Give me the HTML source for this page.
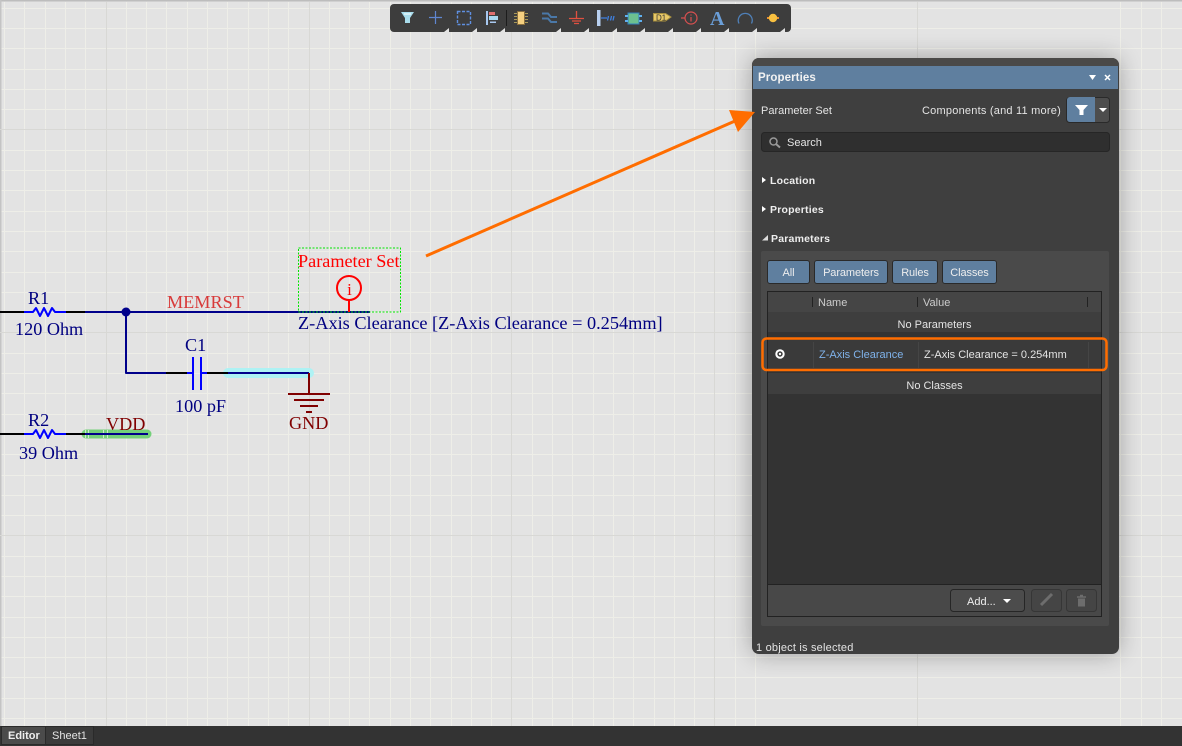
<!DOCTYPE html>
<html><head><meta charset="utf-8"><style>
html,body{margin:0;padding:0;background:#e3e3e3}
#r{position:relative;width:1182px;height:746px;overflow:hidden;background:#e3e3e3}
svg{position:absolute;left:0;top:0}
.p{position:absolute;font-family:"Liberation Sans",sans-serif;font-size:11px;letter-spacing:0;color:#e4e4e4;white-space:nowrap;line-height:14px}
.b{font-size:10.5px;font-weight:bold;letter-spacing:.2px;color:#eee}
.btn{position:absolute;top:260px;height:24px;line-height:24px;background:#5f7f9f;border:1px solid #2a2a2a;border-radius:3px;box-sizing:border-box;text-align:center;font-family:"Liberation Sans",sans-serif;font-size:11px;letter-spacing:-.1px;color:#eee}
</style></head><body><div id="r">
<svg width="1182" height="746" viewBox="0 0 1182 746">
<path fill="none" stroke="#eeeee8" stroke-width="1" d="M4.5 2V726M24.500 2V726M45.500 2V726M65.500 2V726M85.500 2V726M126.500 2V726M146.500 2V726M166.500 2V726M187.500 2V726M207.500 2V726M227.500 2V726M248.500 2V726M268.500 2V726M288.500 2V726M329.500 2V726M349.500 2V726M369.500 2V726M390.500 2V726M410.500 2V726M430.500 2V726M451.500 2V726M471.500 2V726M491.500 2V726M532.500 2V726M552.500 2V726M572.500 2V726M593.500 2V726M613.500 2V726M633.500 2V726M654.500 2V726M674.500 2V726M694.500 2V726M735.500 2V726M755.500 2V726M1120.500 2V726M1141.500 2V726M1161.500 2V726M0 8.500H1182M0 28.500H1182M0 48.500H1182M0 69.500H1182M0 89.500H1182M0 109.500H1182M0 150.500H1182M0 170.500H1182M0 190.500H1182M0 211.500H1182M0 231.500H1182M0 251.500H1182M0 272.500H1182M0 292.500H1182M0 312.500H1182M0 353.500H1182M0 373.500H1182M0 393.500H1182M0 414.500H1182M0 434.500H1182M0 454.500H1182M0 475.500H1182M0 495.500H1182M0 515.500H1182M0 556.500H1182M0 576.500H1182M0 596.500H1182M0 617.500H1182M0 637.500H1182M0 657.500H1182M0 677.500H1182M0 698.500H1182M0 718.500H1182"/>
<rect width="1182" height="1.500" fill="#bdbdbd"/><rect width="1.500" height="726" fill="#c4c4c4"/>
<g fill="#d8d8d5"><rect x="106" y="2" width="1" height="724"/><rect x="309" y="2" width="1" height="724"/><rect x="511" y="2" width="1" height="724"/><rect x="714" y="2" width="1" height="724"/><rect x="917" y="2" width="1" height="724"/><rect y="129" width="1182" height="1"/><rect y="332" width="1182" height="1"/><rect y="535" width="1182" height="1"/></g>

<!-- schematic -->
<g fill="none" stroke-linejoin="round">
<path d="M228 373H309" stroke="#aef2f4" stroke-width="10" stroke-linecap="round"/>
<path d="M86 434H147" stroke="#74d07a" stroke-width="9" stroke-linecap="round"/>
<path d="M85.500 430V438M88.500 430V438M103.500 430V438M107.500 430V438" stroke="#cdeccb" stroke-width="1"/>
<path d="M0 312H24M66 312H85M0 434H24M66 434H148M166 373H187M207 373H228" stroke="#000" stroke-width="2"/>
<path d="M85 312H370M126 312V373H166M228 373H309M85 434H148" stroke="#00008b" stroke-width="2"/>
<path d="M24 312H33L36 308L40 316L44 308L48 316L52 308L55 312H66M24 434H33L36 430L40 438L44 430L48 438L52 430L55 434H66M187 373H193M201 373H207M193 357V390M201 357V390" stroke="#0000ff" stroke-width="2"/>
<path d="M309 373V394M288 394H330M294 400H324M300 406H318M306 412H312" stroke="#800000" stroke-width="2"/>
<circle cx="126" cy="312" r="4.500" fill="#00008b"/>
<rect x="298.500" y="248" width="102" height="64" stroke="#00e600" stroke-width="1" stroke-dasharray="2 1.500"/>
<circle cx="349" cy="288" r="12" stroke="#ff0000" stroke-width="2"/>
<path d="M349 300V312" stroke="#ff0000" stroke-width="2"/>
</g>
<g font-family="'Liberation Serif',serif" font-size="18.200px">
<text x="28" y="304" fill="#000080">R1</text>
<text x="15" y="335" fill="#000080">120 Ohm</text>
<text x="167" y="308" fill="#d83a3a">MEMRST</text>
<text x="185" y="351" fill="#000080">C1</text>
<text x="175" y="412" fill="#000080">100 pF</text>
<text x="289" y="429" fill="#800000">GND</text>
<text x="28" y="426" fill="#000080">R2</text>
<text x="19" y="459" fill="#000080">39 Ohm</text>
<text x="106" y="430" fill="#800000">VDD</text>
<text x="298" y="267" fill="#ff0000">Parameter Set</text>
<text x="349.500" y="295" fill="#ff0000" text-anchor="middle" font-size="17px">i</text>
<text x="298" y="329" fill="#000080" font-size="18.300px">Z-Axis Clearance [Z-Axis Clearance = 0.254mm]</text>
</g>

<!-- toolbar -->
<rect x="390" y="4" width="401" height="28" rx="4" fill="#3d3d3d"/>
<path d="M401 12H414L410 18V23H405V18Z" fill="#a9dcec"/><path d="M404 14H411" stroke="#fff"/>
<path d="M435.500 11V24M429 17.500H442" stroke="#5f86d0" stroke-width="1.200" fill="none"/>
<rect x="457.500" y="11.500" width="13" height="13" fill="none" stroke="#5f8fe0" stroke-width="1.400" stroke-dasharray="3 1.500"/>
<rect x="486" y="11" width="2" height="14" fill="#a8c8f0"/><rect x="489" y="12" width="6" height="3" fill="#e07070"/><rect x="489" y="16" width="9" height="4" fill="#a8d8f0"/><rect x="490" y="21.500" width="6" height="1.500" fill="#a8c8f0"/>
<rect x="506" y="10" width="1" height="16" fill="#1c1c1c"/>
<rect x="517.500" y="11.500" width="7" height="13" fill="#f5d080" stroke="#8a7040"/>
<path d="M514 13.500H517M514 16.500H517M514 19.500H517M514 22.500H517M525 13.500H528M525 16.500H528M525 19.500H528M525 22.500H528" stroke="#a89858"/>
<path d="M542 13.500H548L551 17H557M542 18.500H548L551 22H557" stroke="#4a78a8" stroke-width="2" fill="none"/>
<path d="M576.500 11V18.500M569 18.500H584M572 21H581M574 23.500H579" stroke="#e05040" stroke-width="1.300" fill="none"/>
<rect x="597" y="10" width="3.500" height="16" fill="#b8d0f0"/>
<path d="M601 18H607M607.500 20.500L608.500 16M610.500 20.500L611.500 16M613 20.500L614 16" stroke="#3f80e0" stroke-width="1.300" fill="none"/>
<rect x="628" y="13" width="11" height="11" fill="#6cc090" stroke="#3080c0"/>
<path d="M625 16H628M625 21H628M639 16H642M639 21H642" stroke="#5fb0f0" stroke-width="2"/>
<path d="M653.500 13.500H665.500L671 17L665.500 21H653.500Z" fill="#e8c868" stroke="#a89040"/>
<text x="656" y="20.500" font-family="'Liberation Sans',sans-serif" font-size="8px" fill="#333">D1</text>
<circle cx="691" cy="18" r="6" fill="none" stroke="#d85050" stroke-width="1.200"/><path d="M681 18H685M691 14.500V15.500M691 17V21.500" stroke="#d85050" stroke-width="1.200"/>
<text x="710" y="25" font-family="'Liberation Serif',serif" font-weight="bold" font-size="20px" fill="#6a9ed8">A</text>
<path d="M739 23.500A7 7 0 1 1 751.500 23.500" fill="none" stroke="#4f80b8" stroke-width="1.300"/>
<path d="M767 18H779" stroke="#e89030" stroke-width="2"/><circle cx="773" cy="18" r="4.200" fill="#f8c040"/>
<path fill="#e4e4e4" d="M444 32L449 28V32ZM472 32L477 28V32ZM500 32L505 28V32ZM556 32L561 28V32ZM584 32L589 28V32ZM612 32L617 28V32ZM640 32L645 28V32ZM668 32L673 28V32ZM696 32L701 28V32ZM724 32L729 28V32ZM752 32L757 28V32ZM780 32L785 28V32Z"/>

<!-- panel -->
<rect x="752" y="58" width="367" height="596" rx="8" fill="#000" opacity=".3" style="filter:blur(12px)"/>
<rect x="752" y="58" width="367" height="596" rx="7" fill="#3f3f3f"/>
<path d="M752 66a7 7 0 0 1 7-8h353a7 7 0 0 1 7 8z" fill="#4a4948"/>
<rect x="753" y="66" width="365" height="23" fill="#5f7f9f"/>
<path d="M1089 75H1096L1092.500 80Z" fill="#fff"/><path d="M1105 75L1110 80M1110 75L1105 80" stroke="#fff" stroke-width="1.500"/>
<rect x="1066.500" y="97.500" width="43" height="25" rx="3" fill="#4d4d4d" stroke="#2a2a2a"/>
<path d="M1067 100a3 3 0 0 1 3-3h25v25h-25a3 3 0 0 1-3-3z" fill="#5f7f9f"/><path d="M1075 105H1088L1083.500 110V115H1079.500V110Z" fill="#fff"/><path d="M1099 108H1107L1103 112Z" fill="#fff"/>
<rect x="761.500" y="132.500" width="348" height="19" rx="3" fill="#2f2f2f" stroke="#262626"/>
<circle cx="773.500" cy="141.500" r="3.500" fill="none" stroke="#999" stroke-width="1.500"/><path d="M776 144L780 147.500" stroke="#999" stroke-width="2"/>
<path d="M762 177V183L766 180Z M762 206V212L766 209Z" fill="#fff"/><path d="M762 240.500H768V235Z" fill="#ddd"/>
<rect x="761" y="251" width="348" height="375" rx="2" fill="#4a4a4a"/>
<rect x="767.500" y="291.500" width="334" height="325" fill="#333" stroke="#222"/>
<rect x="768" y="292" width="333" height="20" fill="#454545"/>
<rect x="768" y="312" width="333" height="20" fill="#3e3e3e"/>
<rect x="768" y="338" width="333" height="32" fill="#3a3a3a"/>
<rect x="768" y="373" width="333" height="21" fill="#3e3e3e"/>
<rect x="768" y="585" width="333" height="31" fill="#484848"/><path d="M768 584.500H1101" stroke="#222"/>
<path d="M812.500 297V307M917.500 297V307M1087.500 297V307" stroke="#222" stroke-width="1"/>
<path d="M813.500 342V368M918.500 342V368M1088.500 342V368" stroke="#454545"/>
<circle cx="780" cy="354" r="4.700" fill="#fff"/><circle cx="780" cy="354" r="2.700" fill="#3a3a3a"/><circle cx="780" cy="354" r="1.200" fill="#fff"/>
<rect x="762.500" y="338.500" width="344" height="31.500" rx="4" fill="none" stroke="#ff6d00" stroke-width="2.500"/>
<rect x="950.500" y="589.500" width="74" height="22" rx="3" fill="#4c4c4c" stroke="#262626"/>
<path d="M1003 599H1011L1007 603Z" fill="#fff"/>
<rect x="1031.500" y="589.500" width="30" height="22" rx="3" fill="#454545" stroke="#363636"/>
<rect x="1066.500" y="589.500" width="30" height="22" rx="3" fill="#454545" stroke="#363636"/>
<path d="M1041 605L1052 594" stroke="#6d6d6d" stroke-width="3"/>
<path d="M1077 597H1086M1080 595.500H1083" stroke="#6d6d6d" stroke-width="1.500"/><rect x="1078" y="598.500" width="7" height="8" fill="#6d6d6d"/>

<!-- arrow -->
<path d="M426 256L735 121" stroke="#ff6d00" stroke-width="3" fill="none"/>
<path d="M755 112L729 110L738 132Z" fill="#ff6d00"/>

<!-- tabs -->
<rect y="726" width="1182" height="20" fill="#333"/>
<rect x="1.500" y="726.500" width="44" height="18" fill="#4b4b4b" stroke="#2a2a2a"/>
<rect x="45.500" y="726.500" width="48" height="18" fill="#3b3b3b" stroke="#2a2a2a"/>
</svg>

<div class="p b" style="left:758px;top:71px;font-size:11.500px;color:#f2f2f2;letter-spacing:.1px">Properties</div>
<div class="p" style="left:761px;top:104px">Parameter Set</div>
<div class="p" style="right:121px;top:104px;letter-spacing:.22px">Components (and 11 more)</div>
<div class="p" style="left:787px;top:136px">Search</div>
<div class="p b" style="left:770px;top:174px">Location</div>
<div class="p b" style="left:770px;top:203px">Properties</div>
<div class="p b" style="left:771px;top:232px">Parameters</div>
<div class="btn" style="left:767px;width:43px">All</div>
<div class="btn" style="left:814px;width:74px">Parameters</div>
<div class="btn" style="left:892px;width:46px">Rules</div>
<div class="btn" style="left:942px;width:55px">Classes</div>
<div class="p" style="left:818px;top:296px;color:#ccc">Name</div>
<div class="p" style="left:923px;top:296px;color:#ccc">Value</div>
<div class="p" style="left:768px;width:333px;text-align:center;top:318px">No Parameters</div>
<div class="p" style="left:819px;top:348px;color:#7fb2ea">Z-Axis Clearance</div>
<div class="p" style="left:924px;top:348px">Z-Axis Clearance = 0.254mm</div>
<div class="p" style="left:768px;width:333px;text-align:center;top:379px">No Classes</div>
<div class="p" style="left:967px;top:595px;color:#eee">Add...</div>
<div class="p" style="left:756px;top:641px;letter-spacing:.2px">1 object is selected</div>
<div class="p b" style="left:8px;top:729px;font-size:11px;letter-spacing:0">Editor</div>
<div class="p" style="left:52px;top:729px">Sheet1</div>
</div></body></html>
